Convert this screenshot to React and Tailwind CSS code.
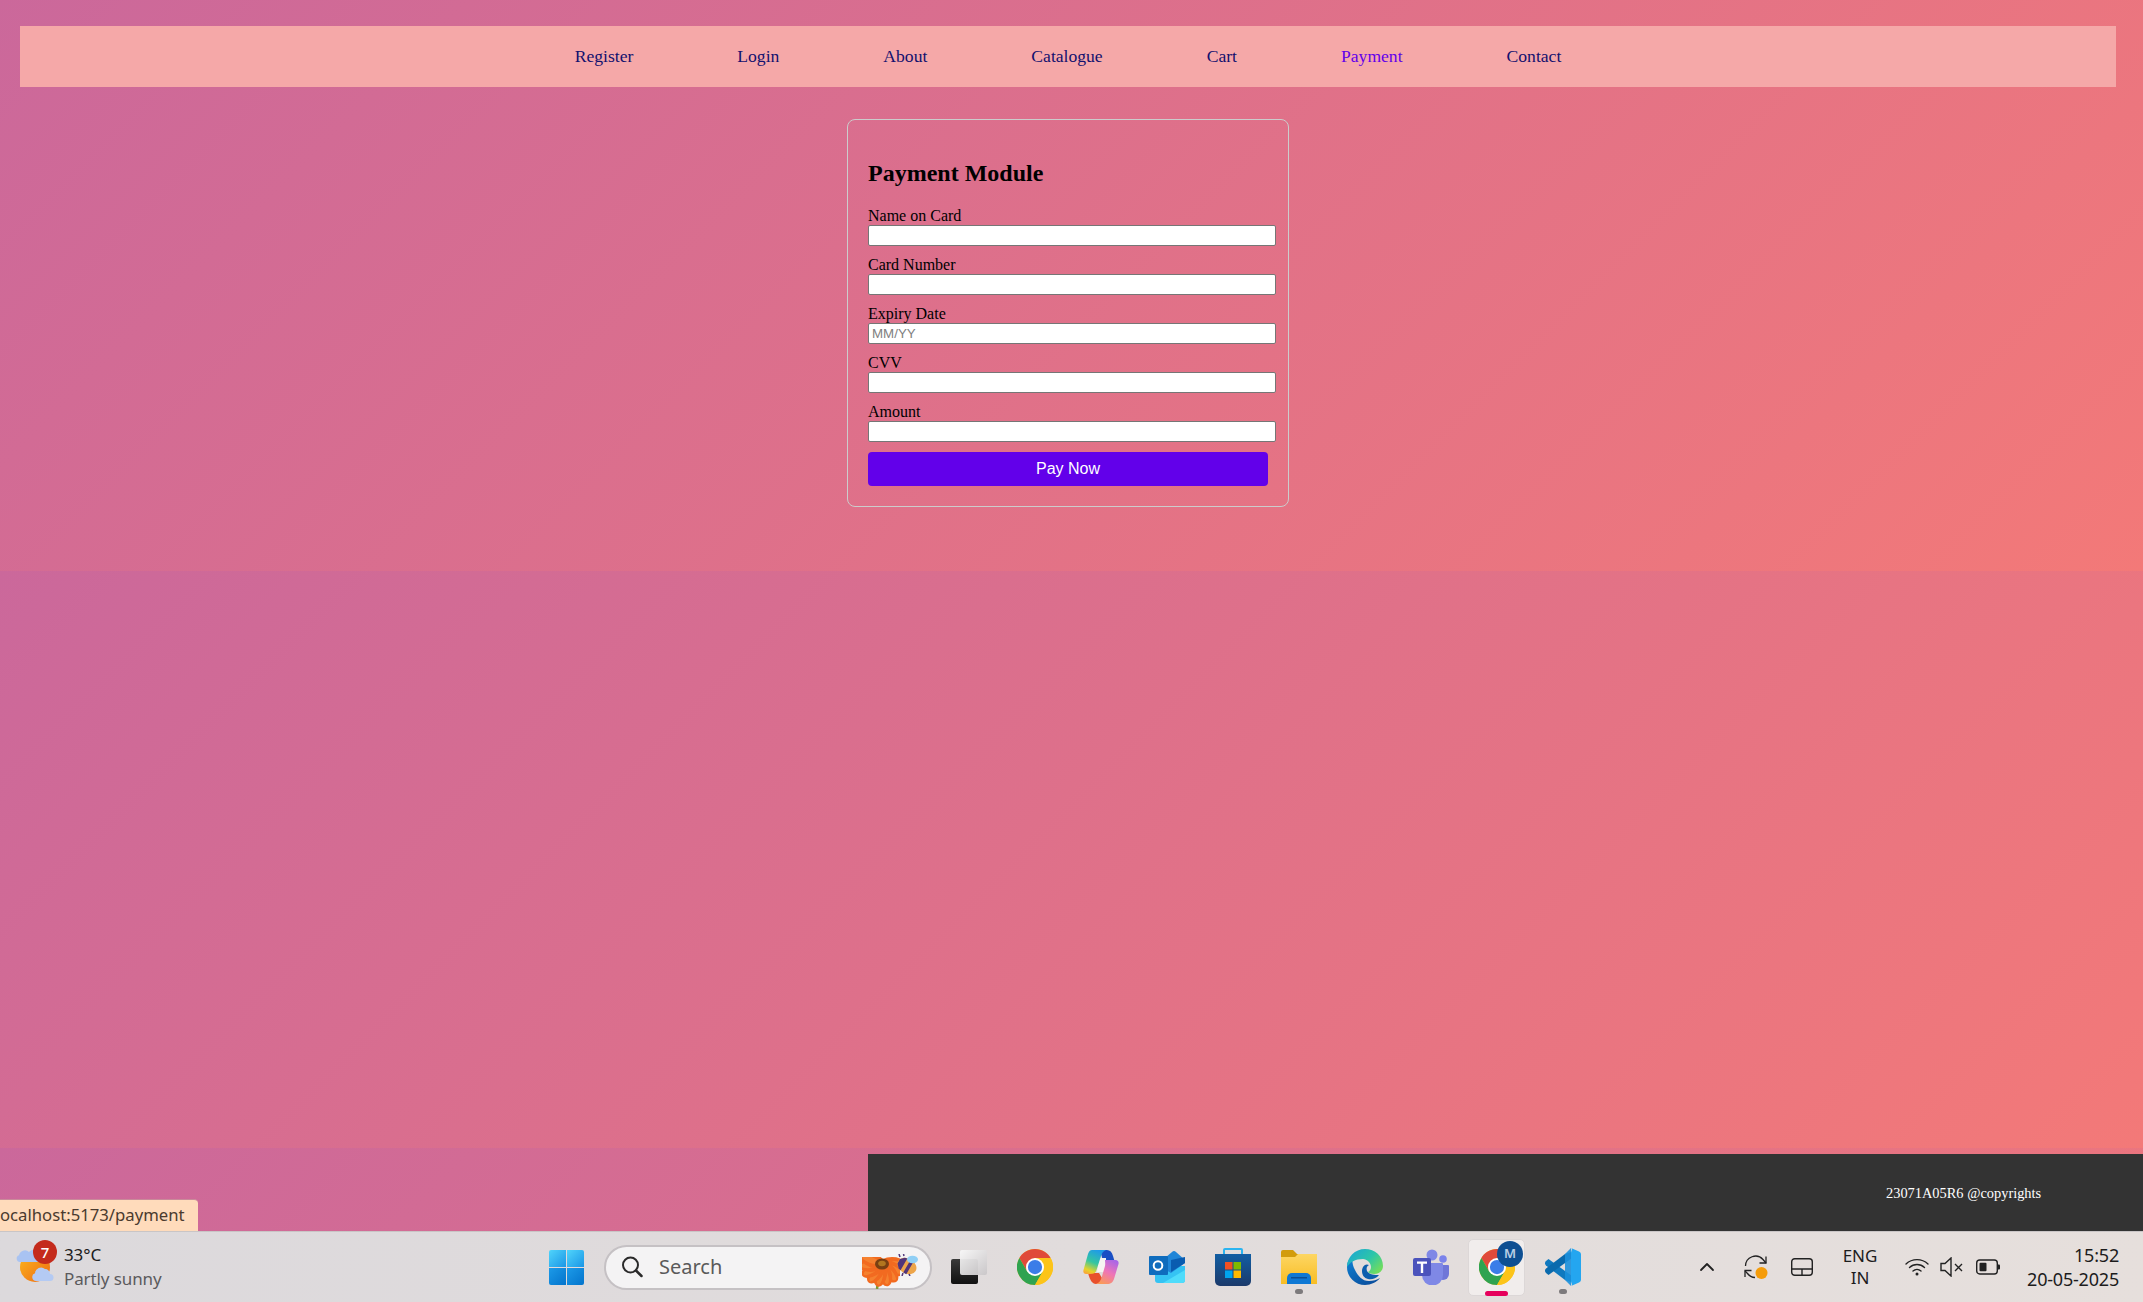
import React from 'react';
import { ChevronUp } from 'lucide-react';

const serif = "font-['Liberation_Serif',serif]";
const segoe = "font-['Noto_Sans',sans-serif]";

const links = ['Register', 'Login', 'About', 'Catalogue', 'Cart', 'Payment', 'Contact'];
const fields = [
  { label: 'Name on Card' },
  { label: 'Card Number' },
  { label: 'Expiry Date', placeholder: 'MM/YY' },
  { label: 'CVV' },
  { label: 'Amount' },
];
const petals = [-100, -75, -50, -25, 0, 25, 50, 75, 100];

const WindowsLogo = () => (
  <svg width="35" height="35" viewBox="0 0 35 35">
    <defs>
      <linearGradient id="winA" x1="0" y1="0" x2="1" y2="1">
        <stop offset="0" stopColor="#50d4fb" />
        <stop offset="1" stopColor="#1a96e6" />
      </linearGradient>
      <linearGradient id="winB" x1="0" y1="0" x2="1" y2="1">
        <stop offset="0" stopColor="#1c9ae8" />
        <stop offset="1" stopColor="#0474cc" />
      </linearGradient>
    </defs>
    <path fill="url(#winA)" d="M2 0h15v17H0V2a2 2 0 0 1 2-2z" />
    <path fill="url(#winA)" d="M18 0h15a2 2 0 0 1 2 2v15H18z" />
    <path fill="url(#winB)" d="M0 18h17v17H2a2 2 0 0 1-2-2z" />
    <path fill="url(#winB)" d="M18 18h17v15a2 2 0 0 1-2 2H18z" />
  </svg>
);

const WeatherIcon = () => (
  <svg width="36" height="36" viewBox="0 0 36 36" className="overflow-visible">
    <defs>
      <linearGradient id="sun" x1="0" y1="0" x2="1" y2="1">
        <stop offset="0" stopColor="#fbb81f" />
        <stop offset="1" stopColor="#ee6a12" />
      </linearGradient>
    </defs>
    <circle cx="18" cy="18" r="15" fill="url(#sun)" />
    <path fill="#a9c3f2" d="M3 13a3.500 3.500 0 0 1-1-6.800A6 6 0 0 1 12 3a5 5 0 0 1 8 6 2 2 0 0 1 0 4z" />
    <path fill="#b4caf3" d="M19 32a4 4 0 0 1-1-7.800A6 6 0 0 1 28 20a5 5 0 0 1 5 5 3.500 3.500 0 0 1 0 7z" />
  </svg>
);

const Flower = () => (
  <svg width="38" height="32" viewBox="0 0 38 32">
    <path stroke="#7e9a2e" strokeWidth="2.500" d="M16 24l-1 8" />
    {petals.map((a) => (
      <g key={a} transform={`rotate(${a + 10} 20 7)`}>
        <ellipse cx="20" cy="17" rx="7" ry="13" fill="#f26a20" />
        <ellipse cx="20" cy="19" rx="3" ry="9" fill="#f7913a" opacity="0.6" />
      </g>
    ))}
    <ellipse cx="20" cy="7" rx="7" ry="5.500" fill="#7a3f12" />
    <ellipse cx="20" cy="6.500" rx="3.800" ry="2.800" fill="#b2761f" />
  </svg>
);

const Bee = () => (
  <svg width="21" height="22" viewBox="0 0 21 22">
    <g transform="rotate(30 10 12)">
      <ellipse cx="10" cy="12" rx="10" ry="7.500" fill="#eda54a" />
      <path fill="#50357a" d="M0.500 9.500L4 5.800l2.500-.5v13.500L4 18.300 0.500 14.500zM10 4.500h3.500v15H10z" />
    </g>
    <ellipse cx="15.500" cy="5.500" rx="5.500" ry="3.800" fill="#90cff5" />
    <path stroke="#50357a" strokeWidth="1.500" d="M3 3L2 0M7 2L6.500 0M6 19l-1 3M12 20l1 2" />
  </svg>
);

const Search = () => (
  <svg width="22" height="22" viewBox="0 0 22 22" fill="none" stroke="#2a2a2a" strokeWidth="2">
    <circle cx="9.500" cy="9" r="7.500" />
    <path strokeWidth="2.500" strokeLinecap="round" d="M15 14.500l5.500 5.500" />
  </svg>
);

const TaskView = () => (
  <div className="relative w-[36px] h-[34px]">
    <div className="absolute left-0 bottom-0 w-[27px] h-[25px] rounded-[2px] bg-gradient-to-b from-[#3a3a3a] to-[#111111]" />
    <div className="absolute right-0 top-0 w-[27px] h-[25px] rounded-[2px] bg-gradient-to-br from-[#f8f8f8] to-[#c9c6c8] opacity-95" />
  </div>
);

const Chrome = ({ size = 36 }) => (
  <svg width={size} height={size} viewBox="0 0 48 48">
    <circle cx="24" cy="24" r="24" fill="#fbc02d" />
    <path fill="#e04a3a" d="M24 0C15.100 0 7.300 4.800 3.200 12l10.400 18L24 12h20.800C40.700 4.800 32.900 0 24 0z" />
    <path fill="#2fa350" d="M3.200 12A24 24 0 0 0 24 48l10.400-18H13.600z" />
    <path fill="#fcc419" d="M44.800 12H24l10.400 18L24 48a24 24 0 0 0 20.800-36z" />
    <circle cx="24" cy="24" r="12" fill="#ffffff" />
    <circle cx="24" cy="24" r="9.500" fill="#3b7de8" />
  </svg>
);

const Copilot = () => (
  <svg width="36" height="36" viewBox="0 0 36 36">
    <defs>
      <linearGradient id="copA" x1="0.6" y1="0" x2="0.2" y2="1">
        <stop offset="0" stopColor="#1f9be8" />
        <stop offset="0.5" stopColor="#35c6a0" />
        <stop offset="0.85" stopColor="#e6d32a" />
        <stop offset="1" stopColor="#f9a83a" />
      </linearGradient>
      <linearGradient id="copB" x1="0.8" y1="0" x2="0.3" y2="1">
        <stop offset="0" stopColor="#a765e8" />
        <stop offset="0.5" stopColor="#ee74b8" />
        <stop offset="1" stopColor="#fa9a5a" />
      </linearGradient>
    </defs>
    <path fill="#1a4fc4" d="M17 1h7c3 0 5 2 6 6l1.500 5H20z" />
    <path fill="#e8502c" d="M5 24h11l3 5c-1 4-3 6-6 6-4 0-6-4-8-11z" />
    <path fill="#f6f3f2" d="M16 9h7v14h-9z" />
    <path fill="url(#copA)" d="M9 1h14c-3 1-4 3-5 6l-4.500 14c-1 3-3 4-6 4H3c-2 0-3.200-1.800-2.500-4L5 5C6 2.500 7 1 9 1z" />
    <path fill="url(#copB)" d="M22 11h10.500c2.500 0 3.500 2 3 4L31 30c-1 3-3 5-7 5H13c3-1 4.500-3 5.500-6L22 17c.5-2 0-5 0-6z" />
  </svg>
);

const Outlook = () => (
  <svg width="36" height="36" viewBox="0 0 36 36">
    <path fill="#35c3f3" d="M6 17h30v14a3 3 0 0 1-3 3H9a3 3 0 0 1-3-3z" />
    <path fill="#4fdcfb" d="M14 34l22-13v10a3 3 0 0 1-3 3z" />
    <path fill="#2086d8" d="M10 14L23 3a3 3 0 0 1 4 0l9 8v3L22 24 10 17z" />
    <path fill="#0a5cb0" d="M22 11l14-3v6l-14 9z" />
    <path fill="#0f6cbd" d="M1 7h17a1 1 0 0 1 1 1v17a1 1 0 0 1-1 1H1a1 1 0 0 1-1-1V8a1 1 0 0 1 1-1z" />
    <circle cx="9" cy="16.500" r="4.300" fill="none" stroke="#ffffff" strokeWidth="2" />
  </svg>
);

const Store = () => (
  <svg width="36" height="38" viewBox="0 0 36 38">
    <defs>
      <linearGradient id="store" x1="0" y1="0" x2="0" y2="1">
        <stop offset="0" stopColor="#115ea3" />
        <stop offset="1" stopColor="#1c3a6b" />
      </linearGradient>
    </defs>
    <path fill="none" stroke="#2bb4f0" strokeWidth="2" d="M9 7V2a1 1 0 0 1 1-1h16a1 1 0 0 1 1 1v5" />
    <path fill="url(#store)" d="M0 6h36v27a5 5 0 0 1-5 5H5a5 5 0 0 1-5-5z" />
    <rect x="10" y="14" width="7.500" height="7.500" fill="#f25022" />
    <rect x="18.500" y="14" width="7.500" height="7.500" fill="#7fba00" />
    <rect x="10" y="22.500" width="7.500" height="7.500" fill="#00a4ef" />
    <rect x="18.500" y="22.500" width="7.500" height="7.500" fill="#ffb900" />
  </svg>
);

const Folder = () => (
  <svg width="36" height="34" viewBox="0 0 36 34">
    <defs>
      <linearGradient id="folder" x1="0" y1="0" x2="0" y2="1">
        <stop offset="0" stopColor="#fdd663" />
        <stop offset="1" stopColor="#f8bd24" />
      </linearGradient>
    </defs>
    <path fill="#d29c0c" d="M0 2a2 2 0 0 1 2-2h10l4 4h20v4H0z" />
    <path fill="url(#folder)" d="M0 7h14l3-3h19v30H0z" />
    <path fill="#0f78d4" d="M6 34v-6a5 5 0 0 1 5-5h14a5 5 0 0 1 5 5v6z" />
    <rect x="10" y="27" width="16" height="1.500" fill="#0a4f96" />
  </svg>
);

const Edge = () => (
  <svg width="36" height="36" viewBox="0 0 36 36">
    <defs>
      <linearGradient id="edgeA" x1="0" y1="0" x2="1" y2="0.7">
        <stop offset="0" stopColor="#1aa3d8" />
        <stop offset="0.6" stopColor="#2dc6a8" />
        <stop offset="1" stopColor="#6fdc5f" />
      </linearGradient>
      <linearGradient id="edgeB" x1="0" y1="0" x2="0.7" y2="1">
        <stop offset="0" stopColor="#0f85d8" />
        <stop offset="1" stopColor="#0a4f9e" />
      </linearGradient>
    </defs>
    <path fill="url(#edgeB)" d="M18 36A18 18 0 0 1 0 18C0 13 2 10 6 7c-1 3-1 9 2 14 3 6 7 11 14 11 4 0 8-1 11-3-3 4-9 7-15 7z" />
    <path fill="url(#edgeA)" d="M0 18C0 8 8 0 18 0c10 0 18 7 18 17 0 5-4 8-9 8-3 0-5-1-6-2 2-1 3-3 3-5 0-4-4-8-8-8-8 0-13 3-16 8z" />
    <path fill="#0c5fae" d="M15 22c0-4 3-8 7-6-2 1-3 3-2 6 2 4 8 4 12 4-3 4-8 5-11 4-4-1-6-4-6-8z" />
  </svg>
);

const Teams = () => (
  <svg width="36" height="36" viewBox="0 0 36 36">
    <circle cx="30" cy="10" r="3.800" fill="#7b83eb" />
    <path fill="#6f76d8" d="M24 16h11a1 1 0 0 1 1 1v8a6 6 0 0 1-12 0z" />
    <circle cx="19" cy="6" r="5.500" fill="#7f88e6" />
    <path fill="#7f88e6" d="M9 14h20a1 1 0 0 1 1 1v11a10 10 0 0 1-21 0z" />
    <rect x="0" y="9" width="18" height="18" rx="2" fill="#4b53bc" />
    <path fill="#ffffff" d="M4 12.500h10v2.200h-3.800V24H7.800v-9.300H4z" />
  </svg>
);

const VSCode = () => (
  <svg width="36" height="38" viewBox="0 0 36 38">
    <path fill="#0f79bf" d="M1 13l2.500-2L27 28l-1 6-6-2L1 17.500a3 3 0 0 1 0-4.500z" />
    <path fill="#0a6aad" d="M1 25l2.500 2L27 10l-1-6-6 2L1 20.500a3 3 0 0 0 0 4.500z" />
    <path fill="#24a6f0" d="M26 0l8 3.500a3 3 0 0 1 2 2.500v26a3 3 0 0 1-2 2.500L26 38c2-1 0-3 0-5V5c0-2 2-4 0-5z" />
    <path fill="#1b90dc" d="M26 0v38l-6-6V6z" opacity="0.9" />
  </svg>
);

const SyncIcon = () => (
  <svg width="26" height="26" viewBox="0 0 26 26" fill="none" stroke="#222222" strokeWidth="1.300">
    <path d="M2.500 12A10 10 0 0 1 20 5.500L23 9" />
    <path d="M23 2.500V9h-6.500" />
    <path d="M12 23.500a10 10 0 0 1-7.500-4L2 17" />
    <path d="M2 23v-6.500h6.500" />
    <circle cx="18.500" cy="19" r="6" fill="#f59c0a" stroke="none" />
  </svg>
);

const Touchpad = () => (
  <svg width="22" height="18" viewBox="0 0 22 18" fill="none" stroke="#222222" strokeWidth="1.400">
    <rect x="0.700" y="0.700" width="20.600" height="16.600" rx="3" />
    <path d="M0.700 11h20.600M11 11v6.300" />
  </svg>
);

const Wifi = () => (
  <svg width="24" height="18" viewBox="0 0 24 18" fill="none" stroke="#222222" strokeWidth="1.400" strokeLinecap="round">
    <path d="M1 6a16 16 0 0 1 22 0" />
    <path d="M4.500 9.500a11 11 0 0 1 15 0" />
    <path d="M8 13a6 6 0 0 1 8 0" />
    <circle cx="12" cy="16" r="1.500" fill="#222222" stroke="none" />
  </svg>
);

const Muted = () => (
  <svg width="23" height="20" viewBox="0 0 23 20" fill="none" stroke="#222222" strokeWidth="1.400">
    <path d="M1 6.500h4L11 1v18l-6-5.500H1z" />
    <path d="M15 7l7 7M22 7l-7 7" />
  </svg>
);

const Battery = () => (
  <svg width="24" height="16" viewBox="0 0 24 16">
    <rect x="0.700" y="1" width="20.600" height="14" rx="3" fill="none" stroke="#222222" strokeWidth="1.400" />
    <rect x="3.500" y="3.800" width="7" height="8.400" rx="1" fill="#222222" />
    <path fill="#222222" d="M22 5.500h1a1 1 0 0 1 1 1v3a1 1 0 0 1-1 1h-1z" />
  </svg>
);

const Slot = ({ children, dot }) => (
  <div className="relative w-[66px] h-full flex items-center justify-center">
    {children}
    {dot && <div className="absolute bottom-[8px] w-[8px] h-[5px] rounded-full bg-[#7d7a7c]" />}
  </div>
);

const Taskbar = () => (
  <div className={`${segoe} h-[71px] shrink-0 border-t border-[#c9c5c6] bg-gradient-to-r from-[#dcd9dc] to-[#e6dfdc] flex items-stretch text-[#1c1c1c]`}>
    <div className="w-[533px] pl-[17px] flex items-center gap-[11px] relative">
      <WeatherIcon />
      <div className="leading-[24px] text-[17px] tracking-[-0.1px]">
        <div>33°C</div>
        <div className="text-[#5b5a5c]">Partly sunny</div>
      </div>
      <div className="absolute left-[33px] top-[8px] w-[24px] h-[24px] rounded-full bg-[#c42b1c] text-white text-[15px] font-medium flex items-center justify-center">7</div>
    </div>
    <Slot><WindowsLogo /></Slot>
    <div className="ml-[5px] w-[328px] h-[45px] self-center rounded-full bg-[#f4f3f4] border-2 border-[#c5c1c4] flex items-center pl-[15px] relative">
      <Search />
      <span className="ml-[16px] text-[#5a5a5a] text-[20px]">Search</span>
      <div className="absolute left-[256px] top-[10px]"><Flower /></div>
      <div className="absolute left-[291px] top-[7px]"><Bee /></div>
    </div>
    <div className="ml-[4px] flex h-full">
      <Slot><TaskView /></Slot>
      <Slot><Chrome /></Slot>
      <Slot><Copilot /></Slot>
      <Slot><Outlook /></Slot>
      <Slot><Store /></Slot>
      <Slot dot><Folder /></Slot>
      <Slot><Edge /></Slot>
      <Slot><Teams /></Slot>
      <div className="relative w-[66px] h-full flex items-center justify-center">
        <div className="absolute left-[4px] top-[7px] w-[57px] h-[57px] rounded-[5px] bg-[#f1edec] border border-[#dcd7d7]" />
        <div className="relative"><Chrome /></div>
        <div className="absolute left-[33px] top-[9px] w-[26px] h-[26px] rounded-full bg-[#0e4f92] text-[#b9cfe6] text-[13px] font-semibold flex items-center justify-center">M</div>
        <div className="absolute left-[21px] bottom-[6px] w-[23px] h-[5px] rounded-full bg-[#e6005c]" />
      </div>
      <Slot dot><VSCode /></Slot>
    </div>
    <div className="flex items-center">
      <ChevronUp className="ml-[99px] w-[24px] h-[24px] text-[#222222]" strokeWidth={1.8} />
      <div className="ml-[24px]"><SyncIcon /></div>
      <div className="ml-[22px]"><Touchpad /></div>
      <div className="ml-[27px] w-[40px] text-center text-[17px] leading-[22px]">
        <div>ENG</div>
        <div>IN</div>
      </div>
      <div className="ml-[25px]"><Wifi /></div>
      <div className="ml-[11px]"><Muted /></div>
      <div className="ml-[13px]"><Battery /></div>
      <div className="ml-[19px] w-[100px] text-right text-[18px] leading-[24px] tracking-[-0.2px]">
        <div>15:52</div>
        <div>20-05-2025</div>
      </div>
    </div>
  </div>
);

export default function App() {
  return (
    <div className={`${serif} relative h-[1302px] flex flex-col overflow-hidden bg-[linear-gradient(135deg,#cb689b,#f37978)] bg-[length:100%_577px] bg-[position:0_-6px]`}>
      <main className="flex-1 pt-[26px] pl-[20px] pr-[27px] flex flex-col items-stretch">
        <nav className="h-[61px] bg-[#f5a8a8] flex items-center justify-center gap-[104px] text-[17.6px] text-[#12106e]">
          {links.map((l) => (
            <a key={l} href="#" className={l === 'Payment' ? 'text-[#6200ea]' : ''}>{l}</a>
          ))}
        </nav>
        <section className="mt-[32px] self-center w-[442px] border border-[#cccccc] rounded-[8px] p-[20px]">
          <h2 className="text-[24px] font-bold text-black leading-[27px] my-[20px]">Payment Module</h2>
          {fields.map((f) => (
            <div key={f.label} className="mb-[10px]">
              <label className="block text-[16px] leading-[18px] text-black">{f.label}</label>
              <input
                type="text"
                placeholder={f.placeholder}
                className="block w-[408px] h-[21px] bg-white border border-[#767676] rounded-[2px] px-[3px] font-['Liberation_Sans',sans-serif] text-[13.33px] placeholder:text-[#808080]"
              />
            </div>
          ))}
          <button className="block w-[400px] h-[34px] bg-[#6200ea] text-white rounded-[4px] font-['Liberation_Sans',sans-serif] text-[16px]">Pay Now</button>
        </section>
      </main>
      <footer className="self-end w-[1275px] h-[77px] bg-[#333333] flex items-center pl-[1018px] pt-[2px] text-white text-[14.4px]">23071A05R6 @copyrights</footer>
      <div className={`${segoe} absolute left-0 top-[1199px] w-[198px] h-[32px] rounded-tr-[4px] border-t border-[#c98a9a] bg-[#ffdbbb] text-[#4a3a2e] text-[16.7px] leading-[30px] whitespace-nowrap`}>
        ocalhost:5173/payment
      </div>
      <Taskbar />
    </div>
  );
}
